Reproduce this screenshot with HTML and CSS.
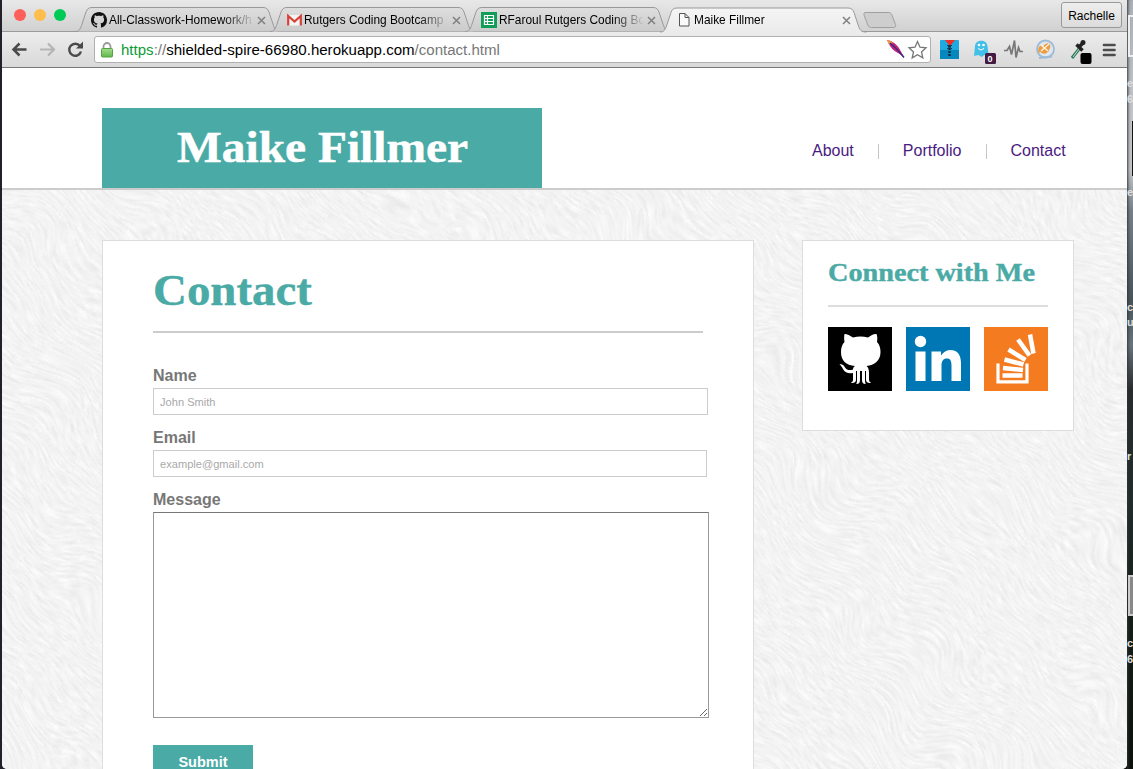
FILE: index.html
```
<!DOCTYPE html>
<html lang="en">
<head>
<meta charset="utf-8">
<title>Maike Fillmer</title>
<link rel="stylesheet" href="styles.css">
</head>
<body>
<svg class="defs" width="0" height="0">
  <defs>
    <linearGradient id="tabfill" x1="0" y1="0" x2="0" y2="1"><stop offset="0" stop-color="#dedede"/><stop offset="1" stop-color="#cbcbcb"/></linearGradient>
    <linearGradient id="activefill" x1="0" y1="0" x2="0" y2="1"><stop offset="0" stop-color="#f5f5f5"/><stop offset="1" stop-color="#ebebeb"/></linearGradient>
    <linearGradient id="lock" x1="0" y1="0" x2="0" y2="1"><stop offset="0" stop-color="#a5dc8d"/><stop offset="1" stop-color="#5fb84b"/></linearGradient>
    <symbol id="tab" viewBox="0 0 209 26"><path d="M0 24.5c4 0 5-2 6.500-6L11 5c1.200-3 2.500-4.500 6-4.500h171c3.500 0 4.800 1.500 6 4.500l4.500 13.500c1.500 4 2.500 6 8 6" stroke="#999"/></symbol>
    <symbol id="octo" viewBox="0 0 16 16"><path d="M8 0C3.580 0 0 3.580 0 8c0 3.540 2.290 6.530 5.470 7.590.4.070.55-.17.55-.38 0-.19-.01-.82-.01-1.490-2.010.37-2.530-.49-2.690-.94-.09-.23-.48-.94-.82-1.130-.28-.15-.68-.52-.01-.53.63-.01 1.080.58 1.230.82.72 1.210 1.870.87 2.330.66.070-.52.28-.87.51-1.070-1.780-.2-3.640-.89-3.640-3.950 0-.87.31-1.590.82-2.150-.08-.2-.36-1.020.08-2.120 0 0 .67-.21 2.200.82.64-.18 1.320-.27 2-.27s1.360.09 2 .27c1.530-1.040 2.200-.82 2.200-.82.44 1.100.16 1.920.08 2.120.51.56.82 1.270.82 2.150 0 3.070-1.870 3.750-3.650 3.950.29.25.54.73.54 1.480 0 1.070-.01 1.930-.01 2.200 0 .21.15.46.55.38A8 8 0 0 0 16 8c0-4.420-3.580-8-8-8z"/></symbol>
  </defs>
</svg>
<div class="desktop">
<div class="window">
  <div class="tabstrip">
    <div class="lights"><i class="red"></i><i class="yellow"></i><i class="green"></i></div>
    <div class="tabs">
      <div class="tab"><svg class="shape" fill="url(#tabfill)"><use href="#tab"/></svg>
        <svg class="fav" viewBox="0 0 16 16" fill="#111"><use href="#octo"/></svg><span class="title">All-Classwork-Homework/h</span><svg class="close" viewBox="0 0 9 9"><path d="M1 1l7 7M8 1l-7 7"/></svg></div>
      <div class="tab"><svg class="shape" fill="url(#tabfill)"><use href="#tab"/></svg>
        <svg class="fav" viewBox="0 0 16 16"><path d="M2 3h13v10.500H2z" fill="#f4f4f4"/><path d="M2.200 13.500V4l6.300 5.500L14.800 4v9.500" fill="none" stroke="#d64237" stroke-width="2.200"/></svg><span class="title">Rutgers Coding Bootcamp</span><svg class="close" viewBox="0 0 9 9"><path d="M1 1l7 7M8 1l-7 7"/></svg></div>
      <div class="tab"><svg class="shape" fill="url(#tabfill)"><use href="#tab"/></svg>
        <svg class="fav" viewBox="0 0 16 16"><path d="M0 0h16v16H0z" fill="#0f9d58"/><path d="M3.500 3.500h9v9h-9zM3.500 6.500h9M3.500 9.500h9M6.500 3.500v9" fill="none" stroke="#fff" stroke-width="1.200"/></svg><span class="title">RFaroul Rutgers Coding Bo</span><svg class="close" viewBox="0 0 9 9"><path d="M1 1l7 7M8 1l-7 7"/></svg></div>
      <div class="tab active"><svg class="shape" fill="url(#activefill)"><use href="#tab"/></svg>
        <svg class="fav" viewBox="0 0 16 16"><path d="M3.500 1.500h5.500l4 4v8.500H3.500zM9 1.500v4h4" fill="#fafafa" stroke="#555"/></svg><span class="title">Maike Fillmer</span><svg class="close" viewBox="0 0 9 9"><path d="M1 1l7 7M8 1l-7 7"/></svg></div>
      <svg class="newtab" viewBox="0 0 34 18"><path d="M3 1.500h22c2 0 3 .5 3.700 2l3.800 10c.6 2-.2 3-2 3H8.500c-2 0-3-.7-3.700-2.500l-3.800-10c-.5-1.500.2-2.500 2-2.500z" fill="#cecece" stroke="#a0a0a0"/></svg>
    </div>
    <div class="user">Rachelle</div>
  </div>
  <div class="toolbar">
    <svg class="nav-icons" viewBox="0 0 92 34">
      <path d="M24.500 17.500H12M17.500 11.500l-6 6 6 6" fill="none" stroke="#4a4a4a" stroke-width="2.500"/>
      <path d="M38 17.500h13M46 11.500l6 6-6 6" fill="none" stroke="#b5b5b5" stroke-width="2.200"/>
      <path d="M78 14A6 6 0 1 0 79 19.500" fill="none" stroke="#4a4a4a" stroke-width="2.400"/><path d="M81 9.500v7h-7z" fill="#4a4a4a"/>
    </svg>
    <div class="omnibox">
      <svg class="lockicon" viewBox="0 0 14 18"><path d="M3.500 8V5.500a3.500 3.500 0 0 1 7 0V8" fill="none" stroke="#999" stroke-width="1.800"/><rect x="1.500" y="7.500" width="11" height="8.500" rx="1" fill="url(#lock)" stroke="#55a244"/></svg>
      <span class="url"><b>https</b><i>://</i>shielded-spire-66980.herokuapp.com<i>/contact.html</i></span>
      <svg class="boxicons" viewBox="0 0 44 24">
        <path d="M1 2c6 1 9 4 12 8l5 9-6-4C6 12 3 7 1 2z" fill="#c8207c"/><path d="M1 2c2 0 4 1 6 3l-4 1.500z" fill="#e9a03c"/><path d="M4 5c5 4 8 7 14 14.500" stroke="#35307e" stroke-width="1.600" fill="none"/>
        <path d="M31.500 3.500l2.500 5.700 6 .6-4.500 4.100 1.300 6-5.300-3.100-5.300 3.100 1.300-6L23 9.800l6-.6z" fill="#fff" stroke="#777" stroke-width="1.300"/>
      </svg>
    </div>
    <svg class="extensions" viewBox="0 0 190 34">
      <g><rect x="3" y="8" width="19" height="19" rx="1" fill="#20a9df"/><path d="M3 18h19v9H3z" fill="#0788bd"/><path d="M8 8h10l-5 6z" fill="#f42d24"/><path d="M12.500 13v11" stroke="#103047" stroke-width="2.500" stroke-dasharray="2 1"/><path d="M10 13l5 4m-5 0l5-4" stroke="#173345"/></g>
      <g><path d="M37 24l1-10c.5-7 12-7 12.500 0l1 8-4 1-3 2-3-2z" fill="#43c0e7"/><circle cx="42" cy="13" r="1.300" fill="#fff"/><circle cx="46.500" cy="13" r="1.300" fill="#fff"/><path d="M41 16.500q3 3 6 0" stroke="#fff" fill="none"/><rect x="48" y="21" width="11" height="11" rx="1.500" fill="#421a42"/><text x="50.500" y="30" class="badge">0</text></g>
      <path d="M67 18.500h3l2.500-4 2 8 3-14 1.500 17 2.500-10 1.500 4h3" fill="none" stroke="#777" stroke-width="1.700"/>
      <g><circle cx="108.500" cy="17" r="8.500" fill="#dfe7ef" stroke="#9dbbd8" stroke-width="1.800"/><path d="M101.500 21c-1-6 1-9 5-7 4-6 9-1 6 3-1 5-7 6-9 3z" fill="#ed9d48"/><path d="M104 13l7 6m-7 0l8-7" stroke="#fff4dd" stroke-width="1.300"/><path d="M102 26l13-1.500" stroke="#9dbbd8" stroke-width="2"/></g>
      <g><path d="M135 26l7-9" stroke="#2e7958" stroke-width="3"/><path d="M136 25l6-8" stroke="#c7dfd1"/><path d="M139.500 12.500l6 6M142 15l4-4" stroke="#222" stroke-width="3.500"/><circle cx="146" cy="10.500" r="2.500" fill="#222"/><rect x="143.500" y="21" width="11" height="11" rx="2" fill="#000"/></g>
      <path d="M167 13h10.500M167 18h10.500M167 23h10.500" stroke="#4c4c4c" stroke-width="2.700" stroke-linecap="round"/>
    </svg>
  </div>
  <div class="page">
    <svg class="fur" viewBox="0 0 1125 701" width="1125" height="701">
      <filter id="fiber" x="-10%" y="-10%" width="120%" height="120%" color-interpolation-filters="sRGB">
        <feTurbulence type="fractalNoise" baseFrequency=".06 .42" numOctaves="3" seed="7" result="n"/>
        <feTurbulence type="fractalNoise" baseFrequency=".014" numOctaves="1" seed="3" result="d"/>
        <feDisplacementMap in="n" in2="d" scale="75" xChannelSelector="R" yChannelSelector="G"/>
        <feColorMatrix values=".12 0 0 0 .893  .12 0 0 0 .893  .12 0 0 0 .893  0 0 0 0 1"/>
      </filter>
      <rect x="-200" y="-400" width="1600" height="1500" transform="rotate(42 560 350)" filter="url(#fiber)"/>
    </svg>
    <header class="site-header">
      <h1 class="logo"><svg width="292" height="52"><text x="0" y="37" textLength="291" lengthAdjust="spacingAndGlyphs">Maike Fillmer</text></svg></h1>
      <nav><a>About</a><span></span><a>Portfolio</a><span></span><a>Contact</a></nav>
    </header>
    <main>
      <section class="contact">
        <h1><svg width="170" height="52"><text x="0" y="37" textLength="159" lengthAdjust="spacingAndGlyphs">Contact</text></svg></h1>
        <form>
          <label>Name</label><input class="name" placeholder="John Smith">
          <label>Email</label><input class="email" placeholder="example@gmail.com">
          <label>Message</label><textarea></textarea>
          <button type="button">Submit</button>
        </form>
      </section>
      <aside>
        <h2><svg width="220" height="34"><text x="0" y="24" textLength="207" lengthAdjust="spacingAndGlyphs">Connect with Me</text></svg></h2>
        <div class="social">
          <svg viewBox="0 0 64 64"><path d="M0 0h64v64H0z"/><path d="M16 7c2-.5 6 1.500 9 3.500 5-1.200 10-1.200 15 0 3-2 6-4 8.500-3.500 1 2 1 5 .5 8 2.500 2.500 3.500 6 3.500 10 0 9-6 13-14 14 2 1.500 2.500 4 2.500 7v7c0 2 2 2 2 3-3 .5-5-1-5-3v-9h-1v10c0 2 1 2 .5 3-2.500 0-3.500-1.500-3.500-4v-9h-2v9c0 2.500-1 4-3.500 4-.5-1 .5-1 .5-3V44h-1v9c0 2-2 3.500-5 3 0-1 2-1 2-3v-7c-4 1-8 0-10-4-1-2-2-3.500-3.500-4.500 2-.5 4 0 5.500 3 2 3 5 3 8 2 0-2 1-3 2-3.500-9-1-14-5-14-14 0-4 1-7.500 3.500-10-.5-3-.5-6 0-8z" fill="#fff"/></svg>
          <svg viewBox="0 0 64 64"><path d="M0 0h64v64H0z" fill="#0077b5"/><circle cx="14.500" cy="14.500" r="5.700" fill="#fff"/><path d="M9.500 24.500h10V54h-10zM25.500 24.500H35v4c2-3 5-5.500 9-5.500 8.500 0 11 6 11 13.500V54H45.500V39c0-5-1-7.500-4.500-7.500-4 0-5.500 2.500-5.500 7.500v15h-10z" fill="#fff"/></svg>
          <svg viewBox="0 0 64 64"><path d="M0 0h64v64H0z" fill="#f47b20"/><g fill="none" stroke="#fff" stroke-width="4.500"><path d="M14 36.500v18.300h29V36.500" stroke-width="3.200"/><path d="M18.500 48.500h20M19 41l20 2M20.500 32.500l19 5M24.500 22.500l17 10.500M34 12.500l11.500 16M46 7.500l3.500 19"/></g></svg>
        </div>
      </aside>
    </main>
  </div>
</div>
<div class="behind"><span class="k1">e</span><span class="k2">6</span><i class="box1"></i><span class="k3">e</span><span class="k4">c</span><span class="k5">u</span><span class="k6">r</span><i class="box2"></i><span class="k7">c</span><span class="k8">6</span><i class="box0"></i></div>
</div>
</body>
</html>
```

FILE: styles.css
```
* { box-sizing: border-box; }
body { margin: 0; font-family: "Liberation Sans", Arial, sans-serif; overflow: hidden; }
.defs { position: absolute; }
.desktop { display: flex; width: 1133px; height: 769px; overflow: hidden; padding-left: 2px; background: linear-gradient(90deg, #23202a 0 10px, transparent 10px), linear-gradient(#a9b0b7 0, #bfc3c7 100px, #c4c7ca 170px, #75818a 210px, #46545a 300px, #66747d 345px, #272b2d 390px, #202c2c 500px, #142019 600px, #0b100c 769px); }
.window { width: 1125px; height: 769px; flex: none; display: flex; flex-direction: column; border-radius: 0 0 5px 5px; overflow: hidden; }
.tabstrip { height: 32px; flex: none; display: flex; background: linear-gradient(#e8e8e8, #d0d0d0); box-shadow: inset 0 -1px #999; }
.lights { display: flex; gap: 8px; padding: 9px 0 0 12px; width: 76px; }
.lights i { width: 12px; height: 12px; border-radius: 50%; }
.red { background: #ff5f5a; } .yellow { background: #ffbd4c; } .green { background: #00ca56; }
.tabs { display: flex; padding-top: 7px; flex: 1; }
.tab { position: relative; width: 195px; height: 25px; flex: none; display: flex; align-items: center; padding-left: 13px; isolation: isolate; }
.tab.active { z-index: 2; }
.shape { position: absolute; left: -3px; top: 0; width: 209px; height: 26px; z-index: -1; }
.active .shape { height: 27px; }
.fav { width: 16px; height: 16px; flex: none; margin-top: 1px; }
.title { font-size: 11.900px; line-height: 16px; margin-left: 2px; width: 144px; flex: none; overflow: hidden; white-space: nowrap; color: #000; -webkit-mask-image: linear-gradient(90deg, #000 114px, transparent 146px); mask-image: linear-gradient(90deg, #000 114px, transparent 146px); }
.close { width: 9px; height: 9px; flex: none; margin: 1px 0 0 4px; stroke: #808080; stroke-width: 1.500; }
.newtab { width: 34px; height: 18px; margin: 4px 0 0 5px; }
.user { width: 61px; height: 26px; margin: 2px 5px 0 0; border: 1px solid #999; border-radius: 3px; font-size: 12px; line-height: 26px; text-align: center; background: linear-gradient(#eee, #dcdcdc); }
.toolbar { height: 36px; flex: none; display: flex; background: linear-gradient(#ececec, #d9d9d9); border-bottom: 1px solid #777; }
.nav-icons { width: 92px; height: 34px; }
.omnibox { width: 837px; height: 27px; margin-top: 4px; border: 1px solid #b0b0b0; border-radius: 3px; background: #fff; display: flex; align-items: center; padding-left: 5px; }
.lockicon { width: 14px; height: 18px; }
.url { flex: 1; margin-left: 7px; font-size: 15.050px; line-height: 20px; white-space: nowrap; }
.url b { color: #0b9a36; font-weight: normal; } .url i { color: #777; font-style: normal; }
.boxicons { width: 44px; height: 24px; }
.extensions { width: 190px; height: 34px; margin-left: 6px; }
.badge { fill: #fff; font-size: 9px; font-weight: bold; }
.page { position: relative; height: 701px; background: #f2f2f2; isolation: isolate; }
.fur { position: absolute; left: 0; top: 0; z-index: -1; }
.site-header { height: 122px; background: #fff; border-bottom: 2px solid #ccc; padding-left: 100px; display: flex; align-items: flex-end; }
h1, h2 { margin: 0; font-family: "Liberation Serif", serif; font-weight: bold; }
h1 svg, h2 svg { display: block; overflow: visible; }
.logo { width: 440px; height: 80px; background: #4aaaa5; padding: 17px 0 0 75px; font-size: 44px; }
.logo text { fill: #fff; stroke: #fff; stroke-width: .5px; }
nav { display: flex; align-items: center; height: 18px; margin: 0 0 28px 270px; font-size: 16px; color: #4a1a82; }
nav span { width: 1px; height: 15px; background: #c4c4cc; margin: 0 24px; }
nav span:first-of-type { margin-left: 24px; }
main { display: flex; align-items: flex-start; padding: 50px 0 0 100px; gap: 48px; }
.contact { width: 652px; height: 600px; padding: 27px 50px; background: #fff; border: 1px solid #ddd; }
.contact h1 { height: 65px; border-bottom: 2px solid #ccc; font-size: 44px; }
.contact h1 text, h2 text { fill: #4aaaa5; stroke: #4aaaa5; stroke-width: .4px; }
form { display: flex; flex-direction: column; align-items: flex-start; padding-top: 33px; }
label { font-size: 16px; line-height: 20px; height: 22px; font-weight: bold; color: #777; }
input { display: block; height: 27px; border: 1px solid #ccc; background: #fff; padding: 2px 6px; margin: 0 0 13px; font: 11.100px "Liberation Sans", sans-serif; }
input::placeholder { color: #a9a9a9; opacity: 1; }
.name { width: 555px; } .email { width: 554px; }
textarea { width: 556px; height: 206px; margin: 0; border: 1px solid #999; border-top-color: #777; background: #fff; resize: both; flex: none; }
button { width: 100px; height: 34px; margin: 27px 0 0; padding: 0; border: 0; background: #4aaaa5; color: #fff; font: bold 14.500px "Liberation Sans", sans-serif; }
aside { width: 272px; height: 191px; border: 1px solid #ddd; background: #fff; padding: 16px 25px; }
aside h2 { height: 50px; border-bottom: 2px solid #ddd; font-size: 26px; }
.social { display: flex; gap: 14px; padding-top: 20px; }
.social svg { width: 64px; height: 64px; display: block; }
.behind { position: relative; width: 6px; overflow: hidden; flex: none; font-size: 11px; font-weight: bold; color: #ddd; box-shadow: inset 3px 0 3px -2px #333; }
.behind span, .behind i { position: absolute; left: 0; line-height: 14px; }
.k1 { top: 76px; } .k2 { top: 92px; } .k3 { top: 185px; } .k4 { top: 300px; } .k5 { top: 315px; } .k6 { top: 449px; } .k7 { top: 636px; } .k8 { top: 652px; }
.behind .box0 { left: 1px; top: 15px; width: 8px; height: 42px; border: 2px solid #eee; }
.behind .box1 { left: 5px; top: 121px; width: 5px; height: 55px; background: #111; }
.behind .box2 { left: 1px; top: 575px; width: 8px; height: 41px; border: 2px solid #ccc; background: #888; }
```
